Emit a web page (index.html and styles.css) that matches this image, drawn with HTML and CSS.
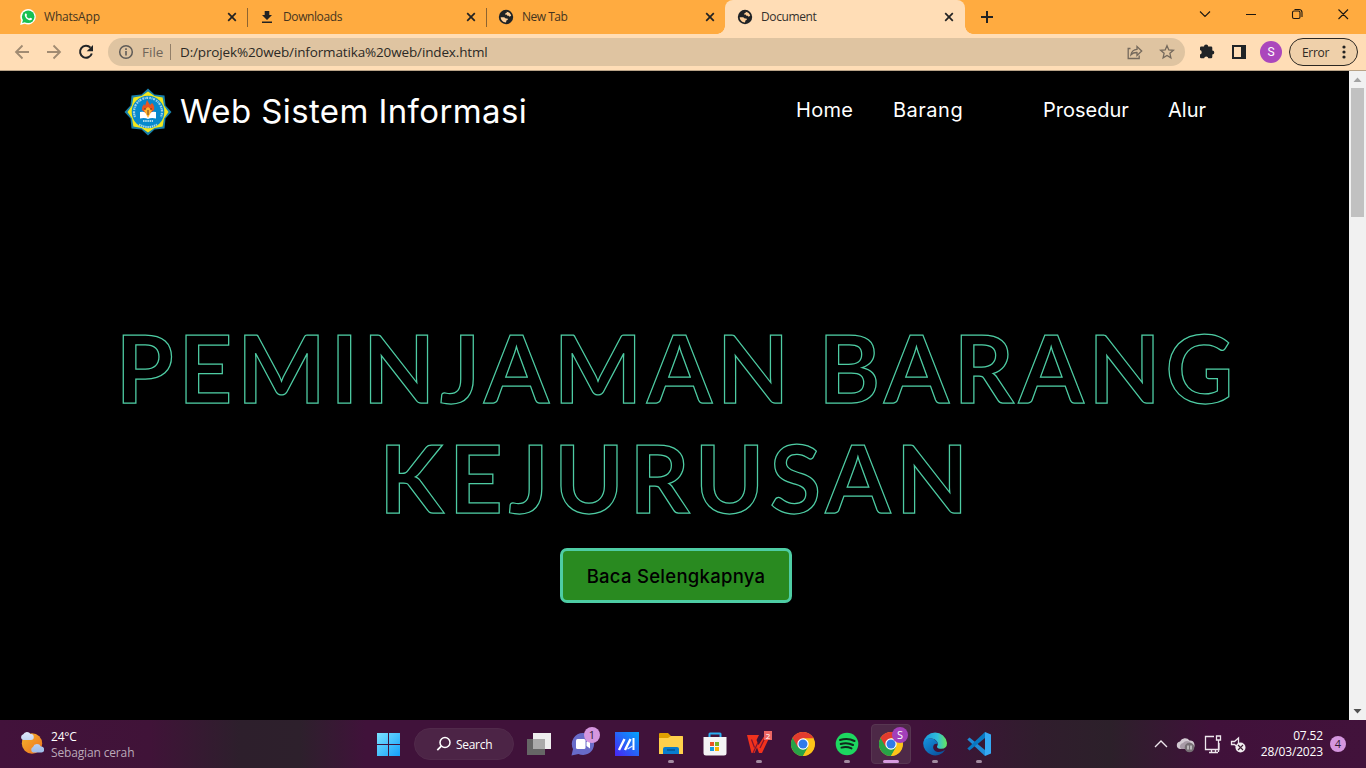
FILE: index.html
```html
<!DOCTYPE html>
<html lang="id">
<head>
<meta charset="utf-8">
<title>Document</title>
<link rel="stylesheet" href="styles.css">
</head>
<body>
<svg class="defs" width="0" height="0" aria-hidden="true">
  <defs>
    <symbol id="close" viewBox="0 0 10 10"><path d="M1.2 1.2 8.8 8.8M8.8 1.2 1.2 8.8" fill="none" stroke="#222" stroke-width="1.7"/></symbol>
    <symbol id="globe" viewBox="0 0 16 16"><circle cx="8" cy="8" r="7.200" fill="#202326"/><path d="M8.500 2.700c2.400.2 4.200 1.900 4.700 4.100l-1.700.9-.7-1H9.400L8.600 5.600l-1.400.2.200-1.500 1.500-.5zM2.700 8.200h3.500l1.600 1.300h1.700l.4 1.300-1.500.7-.4 1.900C5 13.200 2.700 11 2.700 8.200z" fill="#ffcf98"/></symbol>
    <symbol id="chrome" viewBox="0 0 24 24">
      <circle cx="12" cy="12" r="12" fill="#fbc116"/>
      <path d="M12 12 1.600 6A12 12 0 0 0 12 24l5.200-9z" fill="#28a347"/>
      <path d="M1.600 6a12 12 0 0 1 20.800 0L22.400 6.600H12L6.800 15z" fill="#e33b2e"/>
      <path d="M12 6.600h10.400A12 12 0 0 1 12 24l5.200-9z" fill="#fcc419"/>
      <circle cx="12" cy="12" r="5.700" fill="#fff"/><circle cx="12" cy="12" r="4.500" fill="#307be9"/>
    </symbol>
  </defs>
</svg>

<header class="tabstrip">
  <div class="tab tab-first">
    <svg class="favicon" viewBox="0 0 16 16"><path d="M.2 15.900 1.300 11.500A7.700 7.700 0 1 1 4.700 14.700z" fill="#fff"/><circle cx="8.200" cy="7.800" r="6.300" fill="#18c052"/><path d="m2.100 14 1-3.500 2.500 2.600z" fill="#18c052"/><path d="M6 4.300c-.8.100-1.300 1-1.200 1.900.4 2.500 2.800 4.900 5.400 5.100 1 .1 2-.6 1.900-1.700L10.200 8.700l-.9.900C8 9.200 6.900 8.100 6.400 6.900l.7-.900z" fill="#fff"/></svg>
    <span class="tab-title t-wa">WhatsApp</span><svg class="x"><use href="#close"/></svg>
  </div>
  <div class="tab divided">
    <svg class="favicon" viewBox="0 0 16 16"><path d="M5.700 2h4.600v4H13L8 11 3 6h2.700zM3 12.400h10V14H3z" fill="#222"/></svg>
    <span class="tab-title t-dl">Downloads</span><svg class="x"><use href="#close"/></svg>
  </div>
  <div class="tab divided">
    <svg class="favicon"><use href="#globe"/></svg>
    <span class="tab-title t-new">New Tab</span><svg class="x"><use href="#close"/></svg>
  </div>
  <div class="tab active">
    <svg class="favicon"><use href="#globe"/></svg>
    <span class="tab-title t-doc">Document</span><svg class="x"><use href="#close"/></svg>
  </div>
  <svg class="newtab" viewBox="0 0 12 12"><path d="M6 0v12M0 6h12" stroke="#222" stroke-width="2"/></svg>
  <svg class="winbtns" viewBox="0 0 152 16"><g fill="none" stroke="#1d1710" stroke-width="1.100"><path d="m4 5.500 5 5 5-5M50 8.500h10M142.500 3.500l9.500 9.500m0-9.500-9.500 9.500"/><rect x="96.500" y="5" width="7.500" height="7.500" rx="1.500"/><path d="M98.500 3.500h4.500q3 0 3 3v4.500"/></g></svg>
</header>

<div class="toolbar">
  <svg class="navs" viewBox="0 0 80 16"><g fill="none" stroke="#a18b72" stroke-width="1.800"><path d="M15 8H2.500M8.500 1.500 2 8l6.500 6.500M33 8h12.500M39.500 1.500 46 8l-6.500 6.500"/></g><path d="M76.500 3.700A6 6 0 1 0 77.800 9.500" fill="none" stroke="#202326" stroke-width="2"/><path d="M79 1v6.300h-6.300z" fill="#202326"/></svg>
  <div class="omnibox">
    <svg class="info" viewBox="0 0 16 16"><circle cx="8" cy="8" r="6.300" fill="none" stroke="#5f5b57" stroke-width="1.500"/><path d="M8 7v4.500M8 4.300v1.700" stroke="#5f5b57" stroke-width="1.600"/></svg>
    <span class="file">File</span><span class="bar"></span><span class="url">D:/projek%20web/informatika%20web/index.html</span>
    <svg class="omni-icons" viewBox="0 0 48 16"><g fill="none" stroke="#75695c" stroke-width="1.300"><path d="M3.500 4.500H1.200v10h11v-3"/><path d="M4 10.700c.6-3.500 2.500-5.200 6-5.400V2.500l4.700 4.600-4.700 4.300V8.500C7.500 8.400 5.600 9 4 10.700z"/><path d="m40 1.700 1.800 4.200 4.600.4-3.500 3 1 4.500L40 11.400l-3.900 2.400 1-4.500-3.500-3 4.600-.4z"/></g></svg>
  </div>
  <svg class="puzzle" viewBox="0 0 16 16"><path d="M1 4.700q0-1.200 1.200-1.200H5a2.100 2.100 0 0 1 4.200 0h2.900q1.200 0 1.200 1.200v2.700a2 2 0 0 1 0 4v2.700q0 1.200-1.200 1.200H9.400a2.200 2.200 0 0 0-4.300 0H2.200Q1 15.300 1 14.100v-2.700a2.200 2.200 0 0 0 0-4.300z" fill="#202326"/></svg>
  <svg class="panel" viewBox="0 0 14 14"><path d="M1 1h12v12H1z" fill="none" stroke="#202326" stroke-width="2"/><path d="M9 0h5v14H9z" fill="#202326"/></svg>
  <span class="profile">S</span>
  <div class="error"><span>Error</span><svg viewBox="0 0 4 14"><g fill="#222"><circle cx="2" cy="2" r="1.600"/><circle cx="2" cy="7" r="1.600"/><circle cx="2" cy="12" r="1.600"/></g></svg></div>
</div>

<div class="viewport">
  <main class="page">
    <nav class="navbar">
      <svg class="crest" viewBox="0 0 48 48">
        <path d="m47.500 24-6 6.500-1 10-10 1-6.500 6-6.500-6-10-1-1-10-6-6.500 6-6.500 1-10 10-1 6.500-6 6.500 6 10 1 1 10z" fill="#1880ab"/>
        <path d="m44.500 24-4.500 6.500-1.400 8.100-8.100 1.400-6.500 4.500-6.500-4.500-8.100-1.400L8 30.500 3.500 24 8 17.500l1.400-8.100L17.500 8 24 3.500 30.500 8l8.100 1.400 1.400 8.100z" fill="#f3e71b"/>
        <circle cx="24" cy="24" r="16.300" fill="#0789cc"/>
        <path d="M11 29a14 14 0 1 1 26 0" fill="none" stroke="#9fd3ea" stroke-width="2.200" stroke-dasharray="1.600 .7 1 .6 2 1.200"/>
        <path d="M15 36.500q9 5 18 0M19 33h10" fill="none" stroke="#a8d8ec" stroke-width="2" stroke-dasharray="1.500 .7"/>
        <path d="M16 24q5-1 8 2 3-3 8-2v6.500q-5-1-8 .5-3-1.500-8-.5z" fill="#fff"/><path d="M18 22q0-4 2-6l1 2 2-6 3 5 2-2q3 3 2 7l-6 5z" fill="#e95421"/><path d="m20 22 4-3 4 3-4 8z" fill="#ffb52d"/><path d="M20 21h2m4 0h2M24 22v5" stroke="#623a22"/>
      </svg>
      <span class="brand">Web Sistem Informasi</span>
      <div class="links"><a class="home">Home</a><a class="barang">Barang</a><a class="prosedur">Prosedur</a><a class="alur">Alur</a></div>
    </nav>
    <section class="hero">
      <h1><span class="line1">PEMINJAMAN BARANG</span><span class="line2">KEJURUSAN</span></h1>
      <a class="cta"><span>Baca Selengkapnya</span></a>
    </section>
  </main>
  <div class="scrollbar"><svg viewBox="0 0 17 17"><path d="m4.500 11 4-4.500 4 4.500z" fill="#a3a3a3"/></svg><span class="thumb"></span><svg class="down" viewBox="0 0 17 17"><path d="m4.500 6 4 4.500 4-4.500z" fill="#505050"/></svg></div>
</div>

<footer class="taskbar">
  <div class="weather">
    <svg viewBox="0 0 24 24"><defs><linearGradient id="sun" x2="1" y2="1"><stop stop-color="#f4b52d"/><stop offset="1" stop-color="#ee6f1e"/></linearGradient><linearGradient id="cl" x2="0" y2="1"><stop stop-color="#e0e9fa"/><stop offset="1" stop-color="#9dbce9"/></linearGradient></defs><circle cx="12" cy="12.500" r="10.200" fill="url(#sun)"/><path d="M3 9a3 3 0 0 1 .3-5.700A4 4 0 0 1 10.500 3 3 3 0 0 1 11 9zM13 21.500a3 3 0 0 1 0-5.500 4.200 4.200 0 0 1 7.800-.5 3 3 0 0 1 .7 6z" fill="url(#cl)"/></svg>
    <div><b>24°C</b><span>Sebagian cerah</span></div>
  </div>
  <div class="apps">
    <div class="app win"><svg viewBox="0 0 24 24"><defs><linearGradient id="w" x2="1" y2="1"><stop stop-color="#7be2ff"/><stop offset="1" stop-color="#14a0fa"/></linearGradient></defs><path d="M1 1h11v11H1zm12 0h11v11H13zM1 13h11v11H1zm12 0h11v11H13z" fill="url(#w)"/></svg></div>
    <div class="search"><svg viewBox="0 0 16 16"><circle cx="9" cy="6.500" r="5" fill="none" stroke="#fff" stroke-width="1.500"/><path d="m5.300 10.200-4 4" stroke="#fff" stroke-width="1.700"/></svg><span>Search</span></div>
    <div class="app"><svg viewBox="0 0 24 24"><path d="M6 1h18v16H6z" fill="#eee"/><path d="M0 7h18v16H0z" fill="#666"/><path d="M6 7h12v10H6z" fill="#aaa"/></svg></div>
    <div class="app"><svg viewBox="0 0 24 24"><path d="M12 1a11 11 0 1 1-4.500 21L.5 23.500 2 17A11 11 0 0 1 12 1z" fill="#686bc9"/><rect x="5" y="7" width="9.500" height="10" rx="1.500" fill="#fff"/><path d="m15.500 10 3.500-2.500v9L15.500 14z" fill="#fff"/></svg><span class="badge chat">1</span></div>
    <div class="app"><svg viewBox="0 0 24 24"><defs><linearGradient id="m" x1="1" x2="0" y2="1"><stop stop-color="#02a4fb"/><stop offset="1" stop-color="#4923f5"/></linearGradient></defs><path d="M0 0h24v24H0z" fill="url(#m)"/><path d="M4 18 9.500 7M10 18 15.500 7" fill="none" stroke="#fff" stroke-width="2.400"/><path d="M18.500 6v12" fill="none" stroke="#fff" stroke-width="2"/><path d="m12.500 17 5-3" stroke="#d9ecff" stroke-width="1.400"/></svg></div>
    <div class="app run"><svg viewBox="0 0 24 24"><path d="M0 2q0-1 1-1h8l3 3h11q1 0 1 1v5H0z" fill="#df9f00"/><path d="M0 6h9l3-2h11q1 0 1 1v17H0z" fill="#ffd04b"/><path d="M4 22v-5q0-2 2-2h12q2 0 2 2v5z" fill="#087cce"/><path d="M8 17h8v2H8z" fill="#065e9f"/></svg></div>
    <div class="app"><svg viewBox="0 0 24 24"><path d="M6.500 5V2q0-.5.500-.5h10q.5 0 .5.500v3" fill="none" stroke="#29adef" stroke-width="2"/><path d="M.5 5h23v16q0 2.500-2.500 2.500H3Q.5 23.500.5 21z" fill="#f4f4f4"/><path d="M7 10h4v4H7z" fill="#ec5427"/><path d="M12 10h4v4h-4z" fill="#7ab726"/><path d="M7 15h4v4H7z" fill="#159dde"/><path d="M12 15h4v4h-4z" fill="#f9b700"/></svg></div>
    <div class="app run"><svg class="wps" viewBox="0 0 24 24"><path d="M0 3h12l-2.500 5 2 5L18 3h5.500L15 21h-3l-2-5.500L7.500 21H4.500z" fill="#f1321d"/><path d="m4.500 7.500 3 8M13 16l4.500-9M6 21l5-10.500" stroke="#7e1530" stroke-width="1.200"/></svg><span class="corner">2</span></div>
    <div class="app"><svg><use href="#chrome"/></svg></div>
    <div class="app run"><svg viewBox="0 0 24 24"><circle cx="12" cy="12" r="11.300" fill="#1dd760"/><path d="M5 8q8-2.300 14.500 1M5.700 12q6.500-2 12.300 1M6.500 15.600q5-1.500 10 .8" fill="none" stroke="#10271b" stroke-width="2" stroke-linecap="round"/></svg></div>
    <div class="app current"><svg><use href="#chrome"/></svg><span class="badge user">S</span></div>
    <div class="app run"><svg viewBox="0 0 24 24"><defs><linearGradient id="e1"><stop stop-color="#1796dc"/><stop offset=".6" stop-color="#30bdd9"/><stop offset="1" stop-color="#68e65b"/></linearGradient><linearGradient id="e2" x2="1" y2="1"><stop stop-color="#1594e0"/><stop offset="1" stop-color="#084994"/></linearGradient></defs><path d="M.2 11A12 12 0 0 1 24 11q0 5.800-5.700 5.800c-4 0-5-1.800-3.800-3.300C16 10 12 6.500 8 6.500 4.500 6.500 1.500 8 .2 11z" fill="url(#e1)"/><path d="M.2 11C1 7.500 4.500 6.200 8 6.500c3.800.2 6.500 3 6.700 5.500-5-1.800-6.700 6-1 7.700 3.500 1 6.500-.8 8.500-1.700A12 12 0 0 1 .2 11z" fill="url(#e2)"/></svg></div>
    <div class="app run"><svg viewBox="0 0 24 24"><path d="M2.500 5.500.3 7.500 18 24V18z" fill="#208cd7"/><path d="M18 0v6L2.500 18.500.3 16.500z" fill="#0879c3"/><path d="m18 0 6 2.500v19L18 24z" fill="#35a9f3"/></svg></div>
  </div>
  <svg class="tray" viewBox="0 0 96 24"><g fill="none" stroke="#eee7ed" stroke-width="1.300"><path d="m2 15 6-6 6 6M61 4.500h-8.500v13H66V11M56 20.500h9M58.500 18v2m4-2v2M63.500 4h4v4h-4zM65.500 8v12M78.500 9.500h3l4-3.500v10l-4-3.500h-3z"/></g><path d="M27 17a3.800 3.800 0 0 1 0-7.500 5.500 5.500 0 0 1 9.500-1 4.500 4.500 0 0 1 2.500 8.500z" fill="#d2c9d1"/><path d="M28 17a3.500 3.500 0 0 1 2-6 5 5 0 0 1 8 0l1 6z" fill="#a79aa6"/><circle cx="36.500" cy="15.500" r="4.800" fill="#777075"/><path d="M35 13.500v4m3-4v4" stroke="#fff"/><circle cx="87.500" cy="15.500" r="5" fill="#f1edf0"/><path d="m85 13 5 5m0-5-5 5" stroke="#402035" stroke-width="1.100"/></svg>
  <div class="clock"><span class="time">07.52</span><span class="date">28/03/2023</span></div>
  <span class="badge notify">4</span>
</footer>
</body>
</html>
```
FILE: styles.css
```css
* { box-sizing: border-box; }
body { margin: 0; width: 1366px; height: 768px; overflow: hidden; display: flex; flex-direction: column; font-family: "Open Sans", "Noto Sans", sans-serif; }
svg { display: block; flex: none; }
.defs { position: absolute; }
span, a { white-space: nowrap; }

.tabstrip { height: 34px; background: #ffab40; display: flex; flex: none; }
.tab { width: 239px; height: 34px; display: flex; align-items: center; padding: 0 10px 1px 12px; font-size: 12px; color: #45351f; }
.tab-first { width: 247px; padding-left: 20px; }
.divided { background: linear-gradient(#8e6430, #8e6430) 0 8px / 1px 19px no-repeat; }
.favicon { width: 16px; height: 16px; margin-right: 8px; position: relative; top: .5px; }
.tab-title { flex: 1; }
.x { width: 10px; height: 10px; position: relative; top: .5px; }
.active { width: 240px; padding-right: 11px; background: #ffddb6; border-radius: 8px 8px 0 0; position: relative; color: #33302d; }
.active::before, .active::after { content: ""; position: absolute; bottom: 0; width: 8px; height: 8px; }
.active::before { left: -8px; background: radial-gradient(circle at 0 0, transparent 7.5px, #ffddb6 8px); }
.active::after { right: -8px; background: radial-gradient(circle at 100% 0, transparent 7.5px, #ffddb6 8px); }
.newtab { width: 12px; height: 12px; margin: 11px 0 0 16px; }
.winbtns { width: 152px; height: 16px; margin: 6px 18px 0 auto; overflow: visible; }
.t-wa { letter-spacing: -.2px; }
.t-dl { letter-spacing: -.4px; }
.t-new { letter-spacing: -.5px; }
.t-doc { letter-spacing: -.4px; }

.toolbar { height: 37px; flex: none; background: #ffddb6; border-bottom: 1px solid #b9a387; display: flex; align-items: center; padding: 0 8px 0 14px; }
.navs { width: 80px; height: 16px; }
.omnibox { width: 1077px; height: 28px; border-radius: 14px; background: #dfc4a1; margin-left: 14px; padding: 0 10px; display: flex; align-items: center; font-size: 13.500px; }
.info { width: 16px; height: 16px; margin-right: 8px; }
.file { width: 28px; color: #706559; }
.bar { width: 1px; height: 16px; background: #927f69; margin-right: 9px; }
.url { flex: 1; color: #2b2925; letter-spacing: -.14px; }
.omni-icons { width: 48px; height: 16px; }
.puzzle { width: 16px; height: 16px; margin: 0 0 2px 14px; }
.panel { width: 14px; height: 14px; margin-left: 17px; }
.profile { width: 22px; height: 22px; border-radius: 50%; background: #ab47bc; color: #fff; font: 12px/22px Roboto, sans-serif; text-align: center; margin-left: 14px; }
.error { width: 69px; height: 28px; border: 1px solid #2b2722; border-radius: 14px; background: #efd0aa; margin-left: auto; display: flex; align-items: center; justify-content: space-between; padding: 0 11px 0 12px; font-size: 12px; letter-spacing: -.3px; color: #2e2923; }
.error svg { width: 4px; height: 14px; }

.viewport { flex: 1; display: flex; background: #000; min-height: 0; }
.page { width: 1349px; height: 649px; font-family: Inter, sans-serif; color: #fff; }
.navbar { height: 80px; padding-left: 124px; display: flex; align-items: center; }
.crest { width: 48px; height: 48px; margin-right: 8px; margin-top: 1px; }
.brand { width: 616px; font-size: 33px; font-weight: 400; letter-spacing: .4px; }
.links { display: flex; font-size: 20px; margin-bottom: 2px; }
.home { width: 97px; letter-spacing: .3px; }
.barang { width: 150px; letter-spacing: .5px; }
.prosedur { width: 125px; }
.hero { padding-top: 161px; display: flex; flex-direction: column; align-items: center; }
h1 { margin: 0; font: 700 93.500px/110px Lato, sans-serif; color: #000; -webkit-text-stroke: 1.250px #4ecca3; display: flex; flex-direction: column; align-items: center; }
.line1 { letter-spacing: 4.900px; word-spacing: -3px; margin-right: -5px; }
.line2 { letter-spacing: 5.700px; margin-right: -4px; }
.cta { width: 232px; height: 55px; border: 3px solid #4ecda4; border-radius: 7px; background: #298a20; color: #000; display: flex; align-items: center; justify-content: center; font-size: 18.500px; font-weight: 500; letter-spacing: .27px; margin: 16px 0 0 3px; }
.scrollbar { width: 17px; background: #f1f1f1; display: flex; flex-direction: column; }
.scrollbar svg { width: 17px; height: 17px; }
.thumb { width: 13px; height: 129px; margin: 0 2px; background: #c1c1c1; }
.scrollbar .down { margin-top: auto; }

.taskbar { height: 48px; flex: none; display: flex; align-items: center; color: #fff; font-size: 12px; background: linear-gradient(90deg, #42123b 0, #401338 150px, #2d1f2c 240px, #2d202c 300px, #40123a 365px, #40123a 920px, #301d2d 1040px, #2c202a 1110px, #40113a 1210px, #42123b 1366px); }
.weather { width: 366px; padding-left: 20px; display: flex; align-items: center; }
.weather svg { width: 24px; height: 24px; margin: 0 7px 2px 0; }
.weather div { display: flex; flex-direction: column; line-height: 16px; padding-top: 1px; }
.weather b { font-weight: 400; letter-spacing: -.2px; }
.weather span { color: #bba9b9; letter-spacing: -.15px; }
.apps { width: 635px; display: flex; align-items: center; }
.app { width: 44px; height: 48px; display: flex; align-items: center; justify-content: center; position: relative; }
.app svg { width: 24px; height: 24px; position: relative; z-index: 1; }
.search { width: 100px; height: 32px; border-radius: 16px; border: 1px solid #512a4b; background: #4c2446; margin: 0 3px 0 4px; display: flex; align-items: center; padding-left: 21px; letter-spacing: -.3px; }
.search svg { width: 16px; height: 16px; margin-right: 4px; }
.run::after, .current::after { content: ""; position: absolute; left: 19px; bottom: 5px; width: 6px; height: 3px; border-radius: 2px; background: #a28ba0; }
.current::before { content: ""; position: absolute; inset: 4px 2px; border: 1px solid #573651; border-radius: 4px; background: #4d2947; }
.current::after { left: 14px; width: 16px; background: #d79be0; }
.badge { width: 16px; height: 16px; border-radius: 50%; background: #d596df; color: #321c31; font-size: 11px; line-height: 16px; text-align: center; }
.chat { position: absolute; z-index: 2; left: 23px; top: 7px; }
.app .user { position: absolute; z-index: 2; left: 23px; top: 7px; background: #a33fba; color: #fff; }
.corner { position: absolute; z-index: 2; left: 27px; top: 11px; width: 8px; height: 9px; background: #ec6663; color: #fff; font-size: 8px; line-height: 9px; text-align: center; }
.tray { width: 96px; height: 24px; margin-left: 152px; }
.clock { width: 74px; display: flex; flex-direction: column; align-items: flex-end; line-height: 16px; letter-spacing: -.15px; }
.notify { margin-left: 7px; }
```
